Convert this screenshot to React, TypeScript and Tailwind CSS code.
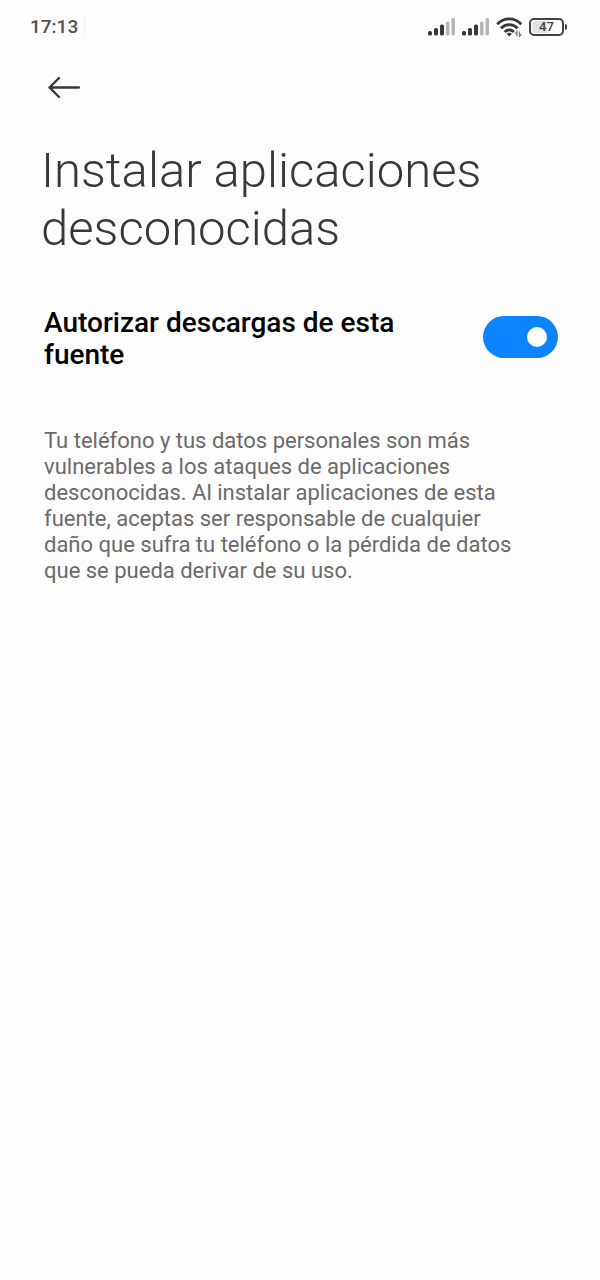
import { useState } from 'react';

function SignalIcon() {
  return (
    <svg className="h-[18px] w-7" viewBox="0 0 28 18">
      <g fill="#383838">
        <rect x="0" y="13" width="4" height="4.500" rx="1.500" />
        <rect x="6" y="10" width="4" height="7.500" rx="1.500" />
        <rect x="12" y="6.500" width="4" height="11" rx="1.500" />
      </g>
      <g fill="#b5b5b5">
        <rect x="18" y="3.500" width="3.500" height="14" rx="1.500" />
        <rect x="23.500" y="0" width="3.500" height="17.500" rx="1.500" />
      </g>
    </svg>
  );
}

function WifiIcon() {
  return (
    <svg className="h-5 w-[27px]" viewBox="0 0 27 20" fill="none" stroke="#383838" strokeWidth="2.8">
      <path d="M1.200 7.200C8 .2 18.500 .2 25.300 7.200" />
      <path d="M5 11.300C9.800 6.500 16.700 6.500 21.500 11.300" />
      <path d="M8.600 15C11.400 12.300 15.100 12.300 17.900 15" />
      <path d="M10.600 16.800Q13.250 14.600 15.900 16.800L13.250 19.600Z" fill="#383838" stroke="none" />
      <path d="M21 19.500V14.500L19.200 16.800M23.500 14.500V19.500L25.300 17.200" stroke="#777" strokeWidth="1.200" />
    </svg>
  );
}

function Battery({ level }: { level: number }) {
  return (
    <div className="flex items-center gap-px">
      <div className="relative flex h-[18px] w-[35px] items-center justify-center overflow-hidden rounded-[5px] border-2 border-[#424242]">
        <div className="absolute inset-y-px left-px rounded-l-sm bg-[#e2e2e2]" style={{ width: `${level}%` }} />
        <span className="relative text-[13px] leading-none font-medium text-[#424242]">{level}</span>
      </div>
      <div className="h-1.5 w-0.5 rounded-r-sm bg-[#424242]" />
    </div>
  );
}

function StatusBar() {
  return (
    <div className="flex h-[53px] items-center justify-between pr-[33px] pl-[30px]">
      <span className="border-r border-[#f0f0f0] pr-1.5 text-[19px] leading-5 font-medium text-[#505050]">17:13</span>
      <div className="flex items-center gap-1.5">
        <SignalIcon />
        <SignalIcon />
        <WifiIcon />
        <Battery level={47} />
      </div>
    </div>
  );
}

export default function App() {
  const [allowed, setAllowed] = useState(true);

  return (
    <div className="min-h-screen bg-[#fdfdfd] font-['Roboto','Noto_Sans',sans-serif]">
      <StatusBar />

      <header className="px-11">
        <button type="button" aria-label="Atrás" className="mt-[17px] flex h-9 w-10 items-center justify-center">
          <svg className="h-6 w-8" viewBox="0 0 32 24" fill="none" stroke="#383838" strokeWidth="2.4" strokeLinecap="round" strokeLinejoin="round">
            <path d="M31 11.500H1.500M11 2L1.500 11.500L11 21" />
          </svg>
        </button>
        <h1 className="-ml-[3px] mt-9 text-[49px] leading-[58px] font-light text-[#383838]">
          Instalar aplicaciones desconocidas
        </h1>
      </header>

      <main className="px-11">
        <label className="mt-[49px] flex cursor-pointer items-start justify-between gap-16">
          <span className="text-[28px] leading-8 font-medium text-black">Autorizar descargas de esta fuente</span>
          <input
            type="checkbox"
            role="switch"
            checked={allowed}
            onChange={(e) => setAllowed(e.target.checked)}
            className="-mr-0.5 mt-[9px] flex h-[42px] w-[75px] shrink-0 cursor-pointer appearance-none items-center rounded-full bg-[#d9d9d9] px-[11px] transition-colors before:size-5 before:rounded-full before:bg-white checked:justify-end checked:bg-[#0d84ff]"
          />
        </label>

        <p className="mt-[57px] pr-7 text-[22px] leading-[26px] text-[#6a6a6a]">
          Tu teléfono y tus datos personales son más vulnerables a los ataques de aplicaciones desconocidas. Al
          instalar aplicaciones de esta fuente, aceptas ser responsable de cualquier daño que sufra tu teléfono o la
          pérdida de datos que se pueda derivar de su uso.
        </p>
      </main>
    </div>
  );
}
